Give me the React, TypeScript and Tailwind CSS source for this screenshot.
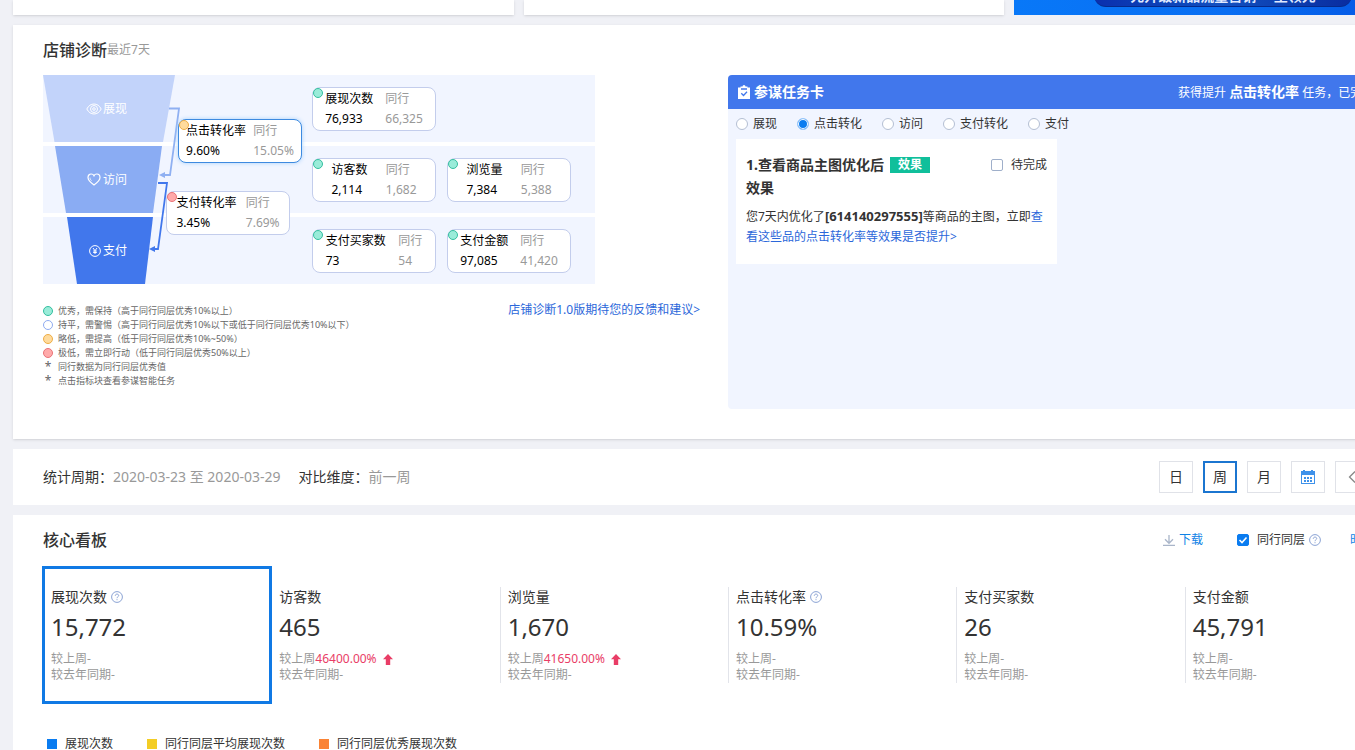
import React, { useState } from "react"

type Level = "good" | "flat" | "low" | "bad"

type Indicator = {
	name: string,
	value: string,
	peer: string,
	level: Level,
}

type Metric = {
	name: string,
	value: string,
	help?: boolean,
	growth?: string,
}

const levelColors: Record<Level, string> = {
	good: "bg-[#9aecd9] border-[#35bfa0]",
	flat: "bg-white border-[#8fabf0]",
	low: "bg-[#ffdb9d] border-[#eead45]",
	bad: "bg-[#ffaaaa] border-[#ea7277]",
}

const stages: { name: string, indicators: Indicator[] }[] = [
	{
		name: "展现",
		indicators: [
			{ name: "展现次数", value: "76,933", peer: "66,325", level: "good" },
		],
	},
	{
		name: "访问",
		indicators: [
			{ name: "访客数", value: "2,114", peer: "1,682", level: "good" },
			{ name: "浏览量", value: "7,384", peer: "5,388", level: "good" },
		],
	},
	{
		name: "支付",
		indicators: [
			{ name: "支付买家数", value: "73", peer: "54", level: "good" },
			{ name: "支付金额", value: "97,085", peer: "41,420", level: "good" },
		],
	},
]

const levelNotes: { level?: Level, text: string }[] = [
	{ level: "good", text: "优秀，需保持（高于同行同层优秀10%以上）" },
	{ level: "flat", text: "持平，需警惕（高于同行同层优秀10%以下或低于同行同层优秀10%以下）" },
	{ level: "low", text: "略低，需提高（低于同行同层优秀10%~50%）" },
	{ level: "bad", text: "极低，需立即行动（低于同行同层优秀50%以上）" },
	{ text: "同行数据为同行同层优秀值" },
	{ text: "点击指标块查看参谋智能任务" },
]

const taskTypes = ["展现", "点击转化", "访问", "支付转化", "支付"]

const metrics: Metric[] = [
	{ name: "展现次数", value: "15,772", help: true },
	{ name: "访客数", value: "465", growth: "46400.00%" },
	{ name: "浏览量", value: "1,670", growth: "41650.00%" },
	{ name: "点击转化率", value: "10.59%", help: true },
	{ name: "支付买家数", value: "26" },
	{ name: "支付金额", value: "45,791" },
]

const series = [
	{ name: "展现次数", color: "bg-[#0a7cf0]" },
	{ name: "同行同层平均展现次数", color: "bg-[#f3cd25]" },
	{ name: "同行同层优秀展现次数", color: "bg-[#fa8335]" },
]

// ====================================================== //

function StageIcon({ name }: { name: string }) {
	if (name === "展现") {
		return (
			<svg viewBox="0 0 16 12" fill="none" stroke="white" className="w-4 h-3">
				<path d="M.8 6C2.6 2.6 5 1 8 1s5.400 1.600 7.200 5C13.400 9.400 11 11 8 11S2.600 9.400.8 6Z" />
				<circle cx="8" cy="6" r="3.500" />
				<circle cx="8" cy="6" r="1.300" />
			</svg>
		)
	}
	if (name === "访问") {
		return (
			<svg viewBox="0 0 14 13" fill="none" stroke="white" strokeWidth="1.200" className="w-3.5 h-[13px] mr-px">
				<path d="M7 12C3.500 9.700 1 7.600 1 4.600 1 2.500 2.400 1 4.200 1 5.500 1 6.500 1.700 7 2.800 7.500 1.700 8.500 1 9.800 1 11.600 1 13 2.500 13 4.600c0 3-2.500 5.100-6 7.400Z" />
				<path d="M3 4.600c0 1.200.6 2.200 1.500 3.100" strokeWidth=".8" />
			</svg>
		)
	}
	return (
		<svg viewBox="0 0 12 12" fill="none" stroke="white" className="size-3 mr-px">
			<circle cx="6" cy="6" r="5.400" />
			<path d="M4 3l2 2.700L8 3M6 5.700V9M4.200 6h3.600M4.200 7.500h3.600" />
		</svg>
	)
}

function HelpIcon() {
	return (
		<svg viewBox="0 0 12 12" fill="none" stroke="#8ba3d4" className="size-3 shrink-0">
			<circle cx="6" cy="6" r="5.400" />
			<path d="M4.300 4.800c0-1 .7-1.700 1.700-1.700s1.700.6 1.700 1.500C7.700 5.700 6 5.800 6 7.200" />
			<path d="M6 8.200v1" />
		</svg>
	)
}

function IndicatorBox({ data, active }: { data: Indicator, active?: boolean }) {
	return (
		<button
			className={`relative flex w-[124px] h-11 items-center justify-evenly rounded-lg border bg-white text-left text-xs leading-5 ${active ? "border-[#3d8ae0] shadow-[0_0_4px_#a9d2fb]" : "border-[#c3cdec]"
				}`}
		>
			<span className={`absolute left-0 top-0 size-2.5 rounded-full border ${levelColors[data.level]}`}></span>
			<span className="flex flex-col text-black">
				<span>{data.name}</span>
				<span>{data.value}</span>
			</span>
			<span className="flex flex-col text-[#999]">
				<span>同行</span>
				<span>{data.peer}</span>
			</span>
		</button>
	)
}

function Funnel() {
	return (
		<div className="relative w-[552px]">
			<svg viewBox="0 0 140 209" className="absolute left-0 top-0 w-[140px] h-[209px]">
				<path d="M0 0H132L120 67H11.500Z" fill="#c2d3fa" />
				<path d="M12 71H119L110 138H23Z" fill="#8aacf3" />
				<path d="M24 142H110L102 209H34Z" fill="#4177ec" />
				<path d="M126 33.500H136L127 100H121" fill="none" stroke="#8fb0f2" strokeWidth="1.800" />
				<path d="M116 100l6-3v6Z" fill="#8fb0f2" />
				<path d="M115 108H124L115 174H111" fill="none" stroke="#4177ec" strokeWidth="1.800" />
				<path d="M106 174l6-3v6Z" fill="#4177ec" />
			</svg>
			<div className="flex flex-col gap-1">
				{stages.map((stage) => (
					<div key={stage.name} className="flex h-[67px] items-center bg-[#f1f5ff]">
						<div className="relative mr-[185px] flex w-[84px] items-center justify-end text-xs text-white">
							<StageIcon name={stage.name} />
							<span className="ml-px">{stage.name}</span>
						</div>
						<div className="flex gap-[11px]">
							{stage.indicators.map((item) => (
								<IndicatorBox key={item.name} data={item} />
							))}
						</div>
					</div>
				))}
			</div>
			{/* conversion between two stages */}
			<div className="absolute left-[135px] top-11">
				<IndicatorBox data={{ name: "点击转化率", value: "9.60%", peer: "15.05%", level: "low" }} active />
			</div>
			<div className="absolute left-[123px] top-[116px]">
				<IndicatorBox data={{ name: "支付转化率", value: "3.45%", peer: "7.69%", level: "bad" }} />
			</div>
		</div>
	)
}

function TaskPanel() {
	const [type, setType] = useState("点击转化")

	return (
		<div className="flex-1 rounded bg-[#f1f5ff] h-[334px]">
			<div className="flex h-[34px] items-center justify-between rounded-t bg-[#4177ec] px-2.5 text-white">
				<h3 className="flex items-center gap-1 text-sm font-bold">
					<svg viewBox="0 0 12 14" className="w-3 h-3.5">
						<path d="M0 2.500h2.500V1.500h2a1.500 1.500 0 0 1 3 0h2v1H12V14H0Z" fill="white" />
						<path d="M3 4h6M3.300 8.300l2.200 2.200 3.500-3.700" fill="none" stroke="#4177ec" strokeWidth="1.300" />
					</svg>
					参谋任务卡
				</h3>
				<p className="w-[225px] whitespace-nowrap text-xs">
					获得提升 <b className="text-sm">点击转化率</b> 任务，已完成 0/1
				</p>
			</div>
			<div className="flex h-[30px] items-center gap-5 px-2 text-xs text-[#333]">
				{taskTypes.map((item) => (
					<label key={item} className="flex items-center gap-[5px]">
						<input
							type="radio"
							name="task_type"
							checked={type === item}
							onChange={() => setType(item)}
							className="size-3 appearance-none rounded-full border border-[#b4bfd3] bg-white checked:border-[#9cc9fb] checked:bg-[#0a7cf0] checked:shadow-[inset_0_0_0_1px_white]"
						/>
						{item}
					</label>
				))}
			</div>
			<div className="mx-2 w-[321px] bg-white px-2.5 pt-3.5 h-[125px] text-[#333]">
				<div className="flex">
					<h4 className="w-36 text-sm font-bold leading-[23px]">1.查看商品主图优化后效果</h4>
					<span className="mt-1 h-4 w-10 bg-[#10bf9b] text-center text-xs font-bold leading-4 text-white">效果</span>
					<label className="ml-auto flex h-6 items-center gap-2 text-xs">
						<input type="checkbox" className="size-3 appearance-none rounded-xs border border-[#9fafca] bg-white checked:bg-[#0a7cf0]" />
						待完成
					</label>
				</div>
				<p className="mt-[7px] text-xs leading-5">
					您7天内优化了<b className="text-[13px]">[614140297555]</b>等商品的主图，立即
					<a href="#" className="text-[#2b67da]">查看这些品的点击转化率等效果是否提升&gt;</a>
				</p>
			</div>
		</div>
	)
}

function Diagnosis() {
	return (
		<section className="bg-white px-[30px] pt-[15px] pb-[30px] shadow-sm">
			<h2 className="flex items-center text-base font-medium leading-5 text-[#333]">
				店铺诊断<span className="text-xs font-normal text-[#999]">最近7天</span>
			</h2>
			<div className="mt-[15px] flex gap-7">
				<div className="w-[657px]">
					<Funnel />
					<div className="mt-4 flex items-start justify-between">
						<ul className="mt-1 text-[9px] leading-[14px] text-[#666]">
							{levelNotes.map((note) => (
								<li key={note.text} className="flex items-center gap-[5px]">
									{note.level ? (
										<span className={`size-2.5 rounded-full border ${levelColors[note.level]}`}></span>
									) : (
										<span className="w-2.5 text-center text-xs leading-[14px]">*</span>
									)}
									{note.text}
								</li>
							))}
						</ul>
						<a href="#" className="text-xs leading-5 text-[#2b67da]">店铺诊断1.0版期待您的反馈和建议&gt;</a>
					</div>
				</div>
				<TaskPanel />
			</div>
		</section>
	)
}

function PeriodBar() {
	const [unit, setUnit] = useState("周")

	return (
		<section className="flex h-14 items-center justify-between bg-white px-[30px] text-sm text-[#333]">
			<div className="flex">
				<span>统计周期：</span>
				<span className="mr-[18px] text-[#999]">2020-03-23 至 2020-03-29</span>
				<span>对比维度：</span>
				<span className="text-[#999]">前一周</span>
			</div>
			<div className="flex gap-2.5">
				{["日", "周", "月"].map((item) => (
					<button
						key={item}
						onClick={() => setUnit(item)}
						className={`w-[34px] h-8 ${unit === item ? "border-2 border-[#1b75d0]" : "border border-[#e0e2e8]"}`}
					>
						{item}
					</button>
				))}
				<button aria-label="选择日期" className="flex w-[34px] h-8 items-center justify-center border border-[#e0e2e8]">
					<svg viewBox="0 0 14 14" className="size-3.5">
						<path d="M0 1h2V0h2v1h6V0h2v1h2v13H0Z" fill="#3f92ea" />
						<path d="M1 5h12v8H1Z" fill="white" />
						<path d="M3 7h2v2H3zM6 7h2v2H6zM9 7h2v2H9zM3 10h2v2H3zM6 10h2v2H6zM9 10h2v2H9z" fill="#3f92ea" />
					</svg>
				</button>
				<button aria-label="上一周" className="flex w-[34px] h-8 items-center justify-center border border-[#e0e2e8]">
					<svg viewBox="0 0 8 12" fill="none" stroke="#888" strokeWidth="1.300" className="w-2 h-3">
						<path d="M7 .5 1.500 6 7 11.500" />
					</svg>
				</button>
				<button aria-label="下一周" className="flex w-[34px] h-8 items-center justify-center border border-[#e0e2e8]">
					<svg viewBox="0 0 8 12" fill="none" stroke="#888" strokeWidth="1.300" className="w-2 h-3">
						<path d="M1 .5 6.500 6 1 11.500" />
					</svg>
				</button>
			</div>
		</section>
	)
}

function CoreBoard() {
	const [selected, setSelected] = useState("展现次数")
	const [peer, setPeer] = useState(true)

	return (
		<section className="bg-white px-[30px] pt-[15px] pb-10 text-[#333]">
			<div className="flex h-5 items-center justify-between">
				<h2 className="text-base font-medium">核心看板</h2>
				<div className="flex items-center pr-[3px] text-xs leading-5">
					<a href="#" className="flex items-center gap-1 text-[#0f82e6]">
						<svg viewBox="0 0 12 12" fill="none" stroke="#a9b5c9" strokeWidth="1.300" className="size-3">
							<path d="M6 1v8M2 5.300l4 4 4-4M0 11.300h12" />
						</svg>
						下载
					</a>
					<label className="relative ml-[34px] mr-1 flex items-center gap-2">
						<input
							type="checkbox"
							checked={peer}
							onChange={() => setPeer(!peer)}
							className="size-3 appearance-none rounded-xs border border-[#9fafca] checked:border-[#0a7cf0] checked:bg-[#0a7cf0]"
						/>
						{peer && (
							<svg viewBox="0 0 12 12" fill="none" stroke="white" strokeWidth="1.600" className="pointer-events-none absolute left-0 size-3">
								<path d="M2.500 6 5 8.500 9.500 3.500" />
							</svg>
						)}
						同行同层
					</label>
					<HelpIcon />
					<a href="#" className="ml-[29px] text-[#0f82e6]">时间趋势图</a>
				</div>
			</div>

			<div className="mt-[17px] grid grid-cols-6">
				{metrics.map((item, index) => (
					<button
						key={item.name}
						onClick={() => setSelected(item.name)}
						className={`flex h-[136px] items-start py-5 text-left ${selected === item.name ? "outline-3 -outline-offset-2 outline-[#1079e4]" : ""}`}
					>
						<div className={`h-24 border-l pl-[7px] text-xs leading-4 text-[#999] ${index > 1 ? "border-[#e2e4ea]" : "border-transparent"}`}>
							<div className="flex items-center gap-1 text-sm leading-5 text-[#333]">
								{item.name}
								{item.help && <HelpIcon />}
							</div>
							<div className="mb-1 text-2xl leading-10 text-[#333]">{item.value}</div>
							<div className="flex items-center">
								较上周{item.growth ? <span className="mr-1.5 text-[#e93d66]">{item.growth}</span> : "-"}
								{item.growth && (
									<svg viewBox="0 0 10 11" fill="#e93d66" className="w-2.5 h-[11px]">
										<path d="M5 0l5 5.200H7.200V11H2.800V5.200H0Z" />
									</svg>
								)}
							</div>
							<div>较去年同期-</div>
						</div>
					</button>
				))}
			</div>

			<div className="mt-[33px] flex gap-[34px] pl-1 text-xs leading-4">
				{series.map((item) => (
					<div key={item.name} className="flex items-center gap-2">
						<span className={`size-2.5 ${item.color}`}></span>
						{item.name}
					</div>
				))}
			</div>
		</section>
	)
}

function App() {
	return (
		<div className="h-screen overflow-hidden bg-[#f0f1f6] font-['Noto_Sans','Noto_Sans_CJK_SC',sans-serif]">
			<main className="flex min-w-[1443px] flex-col gap-2.5 pl-[13px]">
				<div className="flex h-[15px] gap-2.5">
					<div className="w-[501px] bg-white shadow-sm"></div>
					<div className="w-[480px] bg-white shadow-sm"></div>
					<div className="flex flex-1 items-end overflow-hidden bg-linear-to-r from-[#0878f8] via-[#0a6ef2] to-[#0650e0] pl-20 pb-2">
						<a href="#" className="h-10 w-[258px] shrink-0 rounded-b-xl border-b border-[#052a8c] bg-linear-to-r from-[#0b2fae] via-[#1250c0] to-[#0a2ca0] pt-[17px] text-center text-sm leading-6 font-bold text-[#dfe8ff]">
							先升级新品流量营销 一里领先
						</a>
					</div>
				</div>
				<Diagnosis />
				<PeriodBar />
				<CoreBoard />
			</main>
		</div>
	)
}

export default App
